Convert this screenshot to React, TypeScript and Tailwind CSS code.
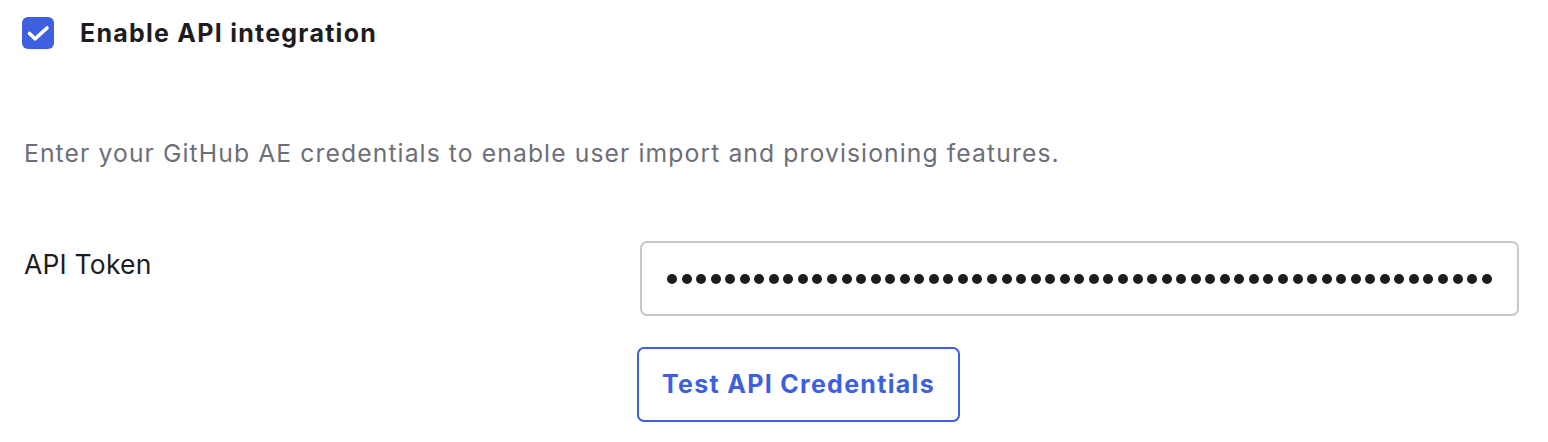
import React, { useState } from 'react';

const DOT_COUNT = 57;

const App: React.FC = () => {
    const [enabled, setEnabled] = useState(true);

    return (
        <div className="w-[1548px] h-[442px] bg-white font-['Inter','Noto_Sans',sans-serif] text-[#1d1d21] overflow-hidden">
            <div className="pl-[22px] pt-[17px]">
                <label className="flex items-center gap-[26px] cursor-pointer">
                    <button
                        type="button"
                        onClick={() => setEnabled(v => !v)}
                        className={`w-[32px] h-[32px] rounded-[6px] flex items-center justify-center ${enabled ? 'bg-[#3d5fe0]' : 'bg-white border-2 border-[#c9c9d0]'}`}
                    >
                        {enabled && (
                            <svg width="32" height="32" viewBox="0 0 32 32" fill="none">
                                <path d="M7.5 16.5 L13 21.8 L25 11" stroke="white" strokeWidth="3.6" strokeLinecap="round" strokeLinejoin="round" />
                            </svg>
                        )}
                    </button>
                    <span className="text-[25px] font-bold leading-[32px] tracking-[1.25px]">Enable API integration</span>
                </label>

                <p className="mt-[87px] pl-[2px] text-[24.7px] leading-[34px] tracking-[1.1px] text-[#6e6e78]">
                    Enter your GitHub AE credentials to enable user import and provisioning features.
                </p>

                <div className="mt-[71px] flex items-start">
                    <div className="w-[618px] pl-[2px] pt-[7px] text-[26.5px] leading-[32px] tracking-[0.2px] text-[#1d1d21]">API Token</div>
                    <div className="w-[879px] h-[75px] rounded-[7px] border-2 border-[#c6c6cd] flex items-center pl-[25px]">
                        <div className="flex gap-[4.56px]">
                            {Array.from({ length: DOT_COUNT }).map((_, i) => (
                                <span key={i} className="block w-[10px] h-[10px] rounded-full bg-[#1d1d21]" />
                            ))}
                        </div>
                    </div>
                </div>

                <div className="mt-[31px] pl-[615px]">
                    <button
                        type="button"
                        className="w-[323px] h-[75px] rounded-[7px] border-2 border-[#3d5fe0] text-[#3d5fe0] text-[25px] font-bold tracking-[1.3px]"
                    >
                        Test API Credentials
                    </button>
                </div>
            </div>
        </div>
    );
};

export default App;
